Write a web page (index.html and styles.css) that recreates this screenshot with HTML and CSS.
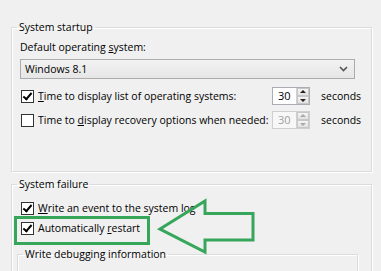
FILE: index.html
```html
<!DOCTYPE html>
<html>
<head>
  <title>Startup and Recovery</title>
  <link rel="stylesheet" href="styles.css">
</head>
<body>
  <fieldset class="group startup">
    <legend>System startup</legend>
    <div class="label">Default operating <u>s</u>ystem:</div>
    <div class="combo">
      <span>Windows 8.1</span>
      <svg width="9" height="6" viewBox="0 0 9 6"><path d="M1 1 L4.5 4.5 L8 1" fill="none" stroke="#555" stroke-width="1.6"/></svg>
    </div>
    <div class="timer-row">
      <label class="check"><span class="box on"></span><span><u>T</u>ime to display list of operating systems:</span></label>
      <div class="spin">
        <span class="val">30</span>
        <span class="arrows"><i class="up"></i><i class="down"></i></span>
      </div>
      <span>seconds</span>
    </div>
    <div class="timer-row">
      <label class="check"><span class="box"></span><span>Time to <u>d</u>isplay recovery options when needed:</span></label>
      <div class="spin disabled">
        <span class="val">30</span>
        <span class="arrows"><i class="up"></i><i class="down"></i></span>
      </div>
      <span>seconds</span>
    </div>
  </fieldset>

  <fieldset class="group failure">
    <legend>System failure</legend>
    <label class="check first"><span class="box on"></span><span><u>W</u>rite an event to the system log</span></label>
    <label class="check second"><span class="box on"></span><span>Automatically <u>r</u>estart</span></label>
    <fieldset class="group debug">
      <legend>Write debugging information</legend>
    </fieldset>
  </fieldset>

  <!-- annotation drawn over the dialog -->
  <svg class="annot" width="381" height="271" viewBox="0 0 381 271">
    <rect x="15.5" y="217.5" width="133" height="26" fill="none" stroke="#35a65a" stroke-width="3"/>
    <polygon points="160,229 205,201 205,213.5 253,213.5 253,240 205,240 205,252" fill="none" stroke="#35a65a" stroke-width="3" stroke-linejoin="miter"/>
  </svg>
</body>
</html>
```

FILE: styles.css
```css
html {
  overflow: hidden;
}
body {
  margin: 0;
  padding: 20px 9px 0 11px;
  background: #f0f0f0;
  font-family: "Open Sans", "Liberation Sans", sans-serif;
  font-size: 10.5px;
  color: #000;
  height: 271px;
  box-sizing: border-box;
  overflow: hidden;
  position: relative;
}
u {
  text-decoration: underline;
  text-underline-offset: 1px;
}
.group {
  margin: 0;
  border: 1px solid #dcdcdc;
  box-shadow: 1px 1px 0 #fff, inset 1px 1px 0 #fff;
  padding: 0 10px 0 8px;
  min-width: 0;
}
.group legend {
  padding: 0 2px;
  margin-left: -3px;
  line-height: 15px;
}
.startup {
  padding-bottom: 42px;
}
.label {
  margin-top: 5px;
  line-height: 15px;
}
.combo {
  margin-top: 4px;
  width: 335px;
  height: 20px;
  box-sizing: border-box;
  border: 1px solid #acacac;
  background: linear-gradient(#f2f2f2, #e6e6e6);
  display: flex;
  align-items: center;
  justify-content: space-between;
  padding: 0 6px 0 4px;
}
.timer-row {
  display: grid;
  grid-template-columns: 241px 38px 40px;
  gap: 11px;
  align-items: center;
  height: 18px;
  margin-top: 8px;
}
.timer-row + .timer-row {
  margin-top: 6px;
}
.check {
  display: flex;
  align-items: center;
  gap: 4px;
  white-space: nowrap;
}
.box {
  width: 11px;
  height: 11px;
  border: 1px solid #333;
  background: #fff;
  margin-left: 1px;
  flex: none;
  position: relative;
}
.box.on::after {
  content: "";
  position: absolute;
  left: 3px;
  top: 0;
  width: 3px;
  height: 7px;
  border: solid #000;
  border-width: 0 2.5px 2.5px 0;
  transform: rotate(40deg);
}
.spin {
  display: flex;
  height: 18px;
  box-sizing: border-box;
  border: 1px solid #abadb3;
  background: #fff;
}
.spin .val {
  flex: 1;
  padding-left: 5px;
  line-height: 16px;
  font-size: 11px;
}
.arrows {
  width: 12px;
  display: flex;
  flex-direction: column;
  border-left: 1px solid #d0d0d0;
  background: #ececec;
}
.arrows i {
  flex: 1;
  position: relative;
  border: 1px solid #c8c8c8;
  background: linear-gradient(#f4f4f4, #e2e2e2);
}
.arrows i::after {
  content: "";
  position: absolute;
  left: 2px;
  border-left: 3px solid transparent;
  border-right: 3px solid transparent;
}
.arrows .up::after {
  top: 1px;
  border-bottom: 3px solid #222;
}
.arrows .down::after {
  top: 2px;
  border-top: 3px solid #222;
}
.spin.disabled {
  border-color: #cfcfcf;
  background: #f7f7f7;
  color: #a0a0a0;
}
.spin.disabled .arrows i::after {
  border-bottom-color: #aaa;
  border-top-color: #aaa;
}
.failure {
  margin-top: 5px;
  border-bottom: 0;
  padding-bottom: 0;
}
.check.first {
  margin-top: 8px;
  height: 16px;
}
.check.second {
  margin-top: 4px;
  height: 16px;
}
.debug {
  margin: 11px 0 0 -3px;
  width: 341px;
  box-sizing: border-box;
  border-bottom: 0;
  height: 24px;
}
.annot {
  position: absolute;
  left: 0;
  top: 0;
  pointer-events: none;
}
```
